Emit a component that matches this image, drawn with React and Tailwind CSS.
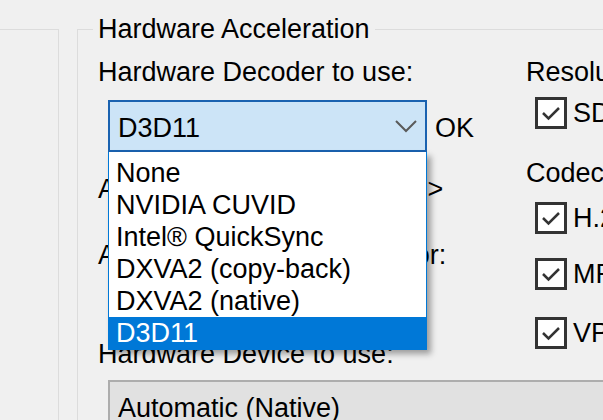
const decoders = ['None', 'NVIDIA CUVID', 'Intel® QuickSync', 'DXVA2 (copy-back)', 'DXVA2 (native)', 'D3D11'];

const CheckBox = ({ label, className }) => (
    <div className={`flex items-center pl-[9px] ${className}`}>
        <div className="w-[32px] h-[32px] shrink-0 border-[3px] border-[#333333] bg-white">
            <svg width="26" height="26" viewBox="0 0 26 26" fill="none">
                <path d="M5 13 L10.5 18.5 L21 8" stroke="#333333" strokeWidth="2.5" />
            </svg>
        </div>
        <span className="ml-[6px]">{label}</span>
    </div>
);

const App = () => {
    const selected = 'D3D11';

    return (
        <div className="w-[603px] h-[420px] overflow-hidden bg-[#f0f0f0] flex items-start font-['Liberation_Sans',Arial,sans-serif] text-[27px] leading-[32px] text-black">
            {/* left group box, only its edge shows */}
            <div className="w-[59px] h-[500px] shrink-0 mt-[29px] border-t border-r border-[#dcdcdc]" />

            <fieldset className="ml-[18px] mt-[13px] w-[600px] shrink-0 border-t border-l border-[#dcdcdc]">
                <legend className="ml-[15px] px-[5px] whitespace-nowrap">Hardware Acceleration</legend>

                <div className="flex pl-[20px] pt-[11px]">
                    <div className="w-[428px] shrink-0 flex flex-col">
                        <div className="whitespace-nowrap">Hardware Decoder to use:</div>

                        <div className="mt-[12px] ml-[10px] flex items-start">
                            <div className="relative w-[319px] shrink-0">
                                <div className="h-[52px] border-2 border-[#1a62b0] bg-[#cce4f7] flex items-center pl-[8px] pr-[8px] pt-[4px]">
                                    <span className="flex-1">{selected}</span>
                                    <svg width="22" height="13" viewBox="0 0 22 13" fill="none" className="mb-[3px]">
                                        <path d="M1 1 L11 11 L21 1" stroke="#5a5a5a" strokeWidth="2" />
                                    </svg>
                                </div>

                                <div className="absolute left-0 top-full w-[319px] z-10 bg-white border border-t-0 border-[#0078d7] pt-[5px] shadow-[4px_4px_6px_rgba(0,0,0,0.35)]">
                                    {decoders.map((name) => (
                                        <div
                                            key={name}
                                            className={`h-[32px] pl-[7px] whitespace-nowrap ${name === selected ? 'bg-[#0078d7] text-white' : ''}`}
                                        >
                                            {name}
                                        </div>
                                    ))}
                                </div>
                            </div>
                            <span className="ml-[8px] mt-[12px]">OK</span>
                        </div>

                        <div className="mt-[21px] whitespace-nowrap">Active Decoder: &lt;not active&gt;</div>
                        <div className="mt-[34px] whitespace-nowrap">Active Hardware Accelerator:</div>
                        <div className="mt-[67px] whitespace-nowrap">Hardware Device to use:</div>
                        <div className="mt-[10px] ml-[10px] w-[560px] h-[52px] shrink-0 border-2 border-[#adadad] bg-[#e1e1e1] pl-[8px] pt-[10px] whitespace-nowrap">
                            Automatic (Native)
                        </div>
                    </div>

                    <div className="flex flex-col shrink-0 whitespace-nowrap">
                        <div>Resolutions</div>
                        <CheckBox label="SD" className="mt-[9px]" />
                        <div className="mt-[28px]">Codecs</div>
                        <CheckBox label="H.264" className="mt-[13px]" />
                        <CheckBox label="MPEG-2" className="mt-[24px]" />
                        <CheckBox label="VP9" className="mt-[27px]" />
                    </div>
                </div>
            </fieldset>
        </div>
    );
};

export default App;
